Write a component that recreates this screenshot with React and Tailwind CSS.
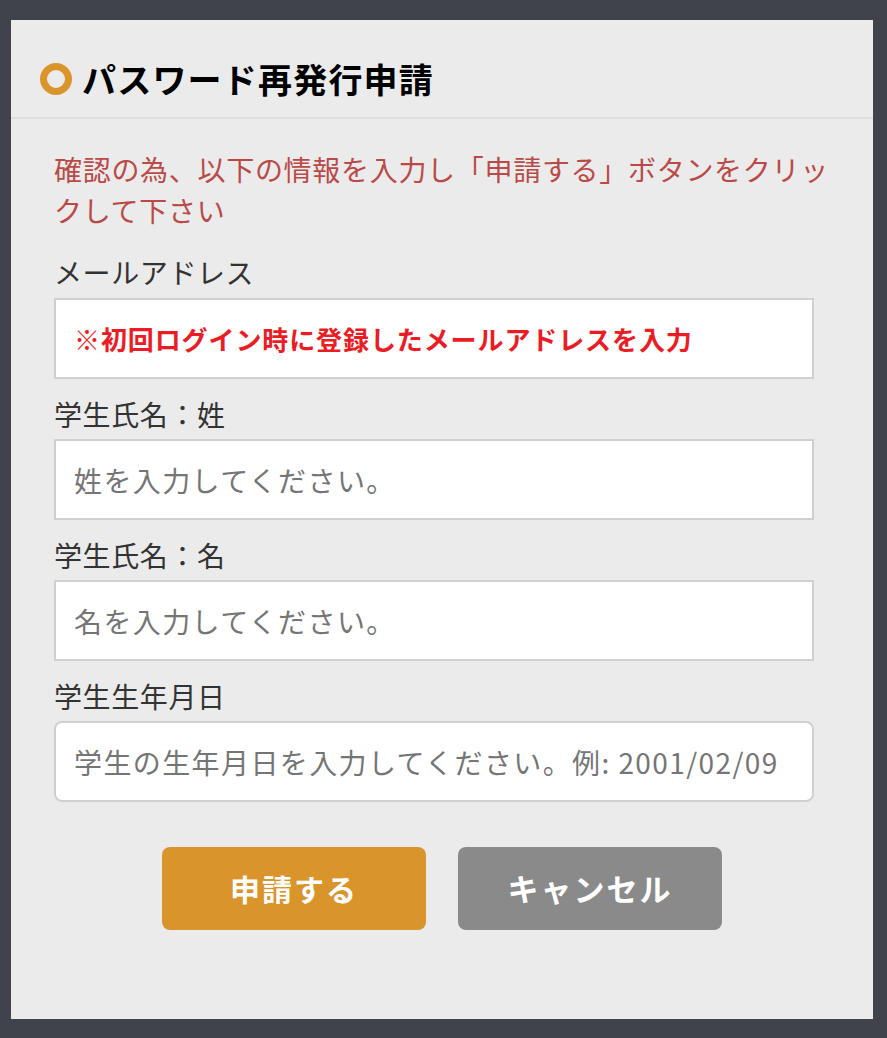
import React from "react";

const Field = ({ label, placeholder, first, rounded, alert }) => (
  <div className={first ? "mt-[21px]" : "mt-[15px]"}>
    <label className="block h-[40px] leading-[40px] text-[28px] tracking-[0.6px] text-[#333333]">
      {label}
    </label>
    <input
      type="text"
      placeholder={placeholder}
      className={`${first ? "mt-[6px]" : "mt-[5px]"} ${
        rounded ? "rounded-[8px]" : ""
      } ${
        alert
          ? "text-[26px] tracking-[0.9px] placeholder:text-[#ec1c24] placeholder:font-bold"
          : "text-[28px] tracking-[1.4px] placeholder:text-[#757575]"
      } block w-[760px] h-[81px] bg-white border-2 border-[#d0d0d0] pl-[18px] outline-none font-['Noto_Sans_CJK_JP','Noto_Sans',sans-serif]`}
    />
  </div>
);

export default function App() {
  return (
    <div className="h-[1038px] bg-[#40434c] pt-[20px] pl-[11px] font-['Noto_Sans_CJK_JP','Noto_Sans',sans-serif]">
      <div className="w-[862px] h-[999px] bg-[#ebebeb]">
        <div className="h-[99px] pt-[20px] pl-[29px] flex items-center border-b-2 border-[#dedede]">
          <span className="w-[32px] h-[32px] rounded-full border-[7px] border-[#d9952c]"></span>
          <h1 className="ml-[10px] text-[34px] font-bold tracking-[1.2px] text-black">
            パスワード再発行申請
          </h1>
        </div>

        <div className="px-[43px] pt-[30px]">
          <p className="text-[28px] leading-[41px] tracking-[0.7px] text-[#b94a48]">
            確認の為、以下の情報を入力し「申請する」ボタンをクリックして下さい
          </p>

          <Field
            first
            alert
            label="メールアドレス"
            placeholder="※初回ログイン時に登録したメールアドレスを入力"
          />
          <Field label="学生氏名：姓" placeholder="姓を入力してください。" />
          <Field label="学生氏名：名" placeholder="名を入力してください。" />
          <Field
            rounded
            label="学生生年月日"
            placeholder="学生の生年月日を入力してください。例: 2001/02/09"
          />

          <div className="mt-[45px] flex justify-center gap-[32px]">
            <button className="w-[264px] h-[83px] rounded-[8px] bg-[#d9952c] text-white text-[30px] font-bold tracking-[2px]">
              申請する
            </button>
            <button className="w-[264px] h-[83px] rounded-[8px] bg-[#8a8a8a] text-white text-[31px] font-bold tracking-[2px]">
              キャンセル
            </button>
          </div>
        </div>
      </div>
    </div>
  );
}
